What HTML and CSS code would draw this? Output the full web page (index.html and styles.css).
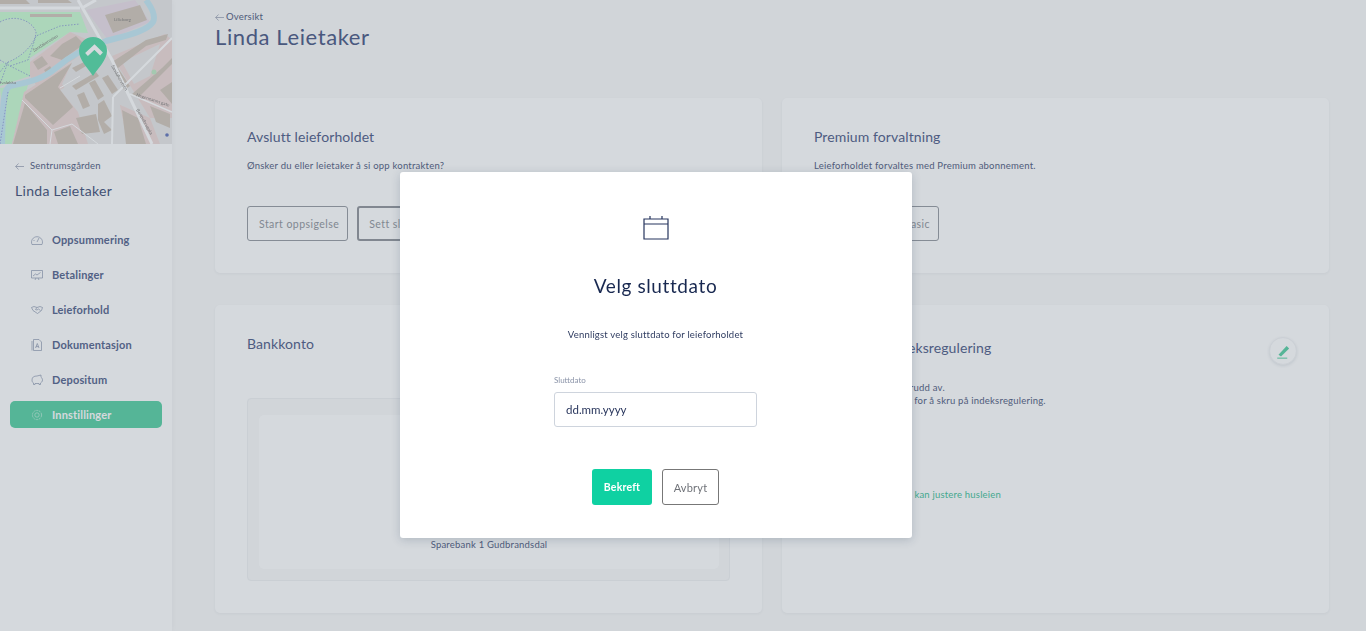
FILE: index.html
```html
<!DOCTYPE html>
<html lang="en">
<head>
    <meta charset="UTF-8">
    <meta name="viewport" content="width=device-width, initial-scale=1.0">
    <title>Linda Leietaker</title>
    <link rel="stylesheet" href="styles.css">
</head>
<body>
    <div class="layout">
        <aside class="sidebar">
            <svg class="map" viewBox="0 0 172 144" width="172" height="144">
                <rect width="172" height="144" fill="#ebeae9"/>
                <!-- parks -->
                <path d="M0 12H80L88 33L70 32L30 58L30 76L0 86Z" fill="#cdfcd5"/>
                <path d="M0 22C14 14 32 20 36 32C36 44 20 58 8 62L0 64Z" fill="#d9f6e0"/>
                <path d="M0 88L28 85L22 105L12 144H5Z" fill="#cdfcd5"/>
                <!-- pink plots -->
                <path d="M30 62L70 32L88 40L76 58L36 85L30 76Z" fill="#f0dcda"/>
                <path d="M24 92L72 62L62 84L78 108L100 144H12Z" fill="#f0dcda"/>
                <path d="M112 56L165 34L172 40V118L150 118Z" fill="#f0dcda"/>
                <path d="M86 10L135 0L150 22L108 40Z" fill="#ece0ea"/>
                <path d="M118 104L150 118L160 144H122Z" fill="#f0dcda"/>
                <!-- plain residential area -->
                <path d="M60 90L92 72L118 96L128 144H88L78 112Z" fill="#ebeae9"/>
                <path d="M122 62L160 44L150 76L134 84Z" fill="#ebeae9"/>
                <!-- buildings -->
                <g fill="#d5cabf">
                    <path d="M25 95L72 63L58 87L73 107L53 125L25 98Z"/>
                    <path d="M25 103L47 130V144H13Z"/>
                    <path d="M105 15L140 5L147 20L113 33Z"/>
                    <path d="M50 56L62 44L76 36L84 44L62 60Z"/>
                    <path d="M33 62L42 56L48 64L38 70Z"/>
                    <path d="M44 70L50 66L54 72L48 76Z"/>
                    <path d="M72 68L84 62L86 66L76 72Z"/>
                    <path d="M72 86L96 72L99 76L76 90Z"/>
                    <path d="M89 83L95 80L104 96L98 100Z"/>
                    <path d="M102 78L108 75L118 90L112 94Z"/>
                    <path d="M77 95L84 92L90 106L83 109Z"/>
                    <path d="M98 104L104 100L112 116L104 122L112 130L104 134L98 120Z"/>
                    <path d="M76 118L96 114L100 132L82 134Z"/>
                    <path d="M54 132L70 126L78 144H58Z"/>
                    <path d="M112 62L146 40L168 34L166 40L146 46L118 68L130 86L124 90Z"/>
                    <path d="M132 94L162 68L172 58V64L138 98Z"/>
                    <path d="M160 90L172 82V104Z"/>
                    <path d="M122 110L138 118L146 144H126Z"/>
                    <path d="M150 106L170 114V128L156 122Z"/>
                    <path d="M0 0H26L30 4H0Z"/>
                    <path d="M38 0H68L72 3H38Z"/>
                    <path d="M30 14H72L72 17H30Z"/>
                </g>
                <!-- river -->
                <path d="M146 0C152 8 156 16 153 22C146 32 124 36 106 41C84 48 70 56 56 68C42 80 28 82 10 86C2 90 3 110 2 144" fill="none" stroke="#c9eaf4" stroke-width="6"/>
                <!-- roads -->
                <g fill="none" stroke="#fff">
                    <path d="M0 8H80" stroke-width="3"/>
                    <path d="M78 0L112 60L152 144" stroke-width="3"/>
                    <path d="M82 8L96 0" stroke-width="3"/>
                    <path d="M113 97L172 38" stroke-width="2"/>
                    <path d="M113 97L112 144" stroke-width="2"/>
                    <path d="M60 88L80 76" stroke-width="1"/>
                    <path d="M130 94L172 112" stroke-width="1.5"/>
                    <path d="M22 100L52 130L50 144" stroke-width="1"/>
                    <path d="M52 130L72 124L98 144" stroke-width="1"/>
                </g>
                <!-- foot paths -->
                <g fill="none" stroke="#8a8ed8" stroke-width=".7" stroke-dasharray="1.5 1.5">
                    <path d="M0 22C14 14 32 20 36 32C36 44 20 58 8 62L0 72"/>
                    <path d="M0 60L10 66L28 60L36 36L60 26L80 24"/>
                    <path d="M8 62L0 84"/>
                    <path d="M8 92L0 144"/>
                    <path d="M10 66L30 76"/>
                </g>
                <circle cx="154" cy="72" r="2.5" fill="#c4ecc8"/>
                <circle cx="167" cy="135" r="1.8" fill="#6d7ec0"/>
                <text x="114" y="21" class="map-label">Lilleborg</text>
                <text x="0" y="84" class="map-label">Ivaløkka</text>
                <text x="34" y="52" class="map-label" transform="rotate(-32 34 52)">Sandakerveien</text>
                <text x="111" y="66" class="map-label" transform="rotate(60 111 66)">Sandakerveien</text>
                <text x="136" y="110" class="map-label" transform="rotate(60 136 110)">Bentsebrugata</text>
                <text x="136" y="96" class="map-label" transform="rotate(18 136 96)">Hegermanns gate</text>
                <path d="M93 76C88 68 79 60 79 51A14 14 0 0 1 107 51C107 60 98 68 93 76Z" fill="#5fdcab"/>
                <path d="M86.5 54.5L94.5 47L101.5 54" fill="none" stroke="#fff" stroke-width="4"/>
            </svg>
            <div class="side-head">
                <a class="back side-back"><svg class="arrow" viewBox="0 0 9 7" width="9" height="7"><path d="M9 3.5H.7M3.5 .5L.7 3.5L3.5 6.5"/></svg>Sentrumsgården</a>
                <h2>Linda Leietaker</h2>
            </div>
            <nav class="menu">
                <a class="menu-item">
                    <svg viewBox="0 0 12 12" width="12" height="12"><path d="M1 10.5A5.5 5.5 0 1 1 11 10.5ZM6 8L8 4M2.5 6.5H3.5"/></svg>
                    Oppsummering
                </a>
                <a class="menu-item">
                    <svg viewBox="0 0 12 12" width="12" height="12"><path d="M.5 1.5H11.5V9H.5ZM2 7L4.5 5L6 6L9.5 3.5M4 11L5 9M8 11L7 9"/></svg>
                    Betalinger
                </a>
                <a class="menu-item">
                    <svg viewBox="0 0 12 12" width="12" height="12"><path d="M.5 3.5L3 2.5L6 3.5L9 2.5L11.5 3.5L10.5 6.5L6.5 9.5L2 6.5ZM6 3.5L4.5 5.5L6 6L7.5 5L9.5 6.5"/></svg>
                    Leieforhold
                </a>
                <a class="menu-item">
                    <svg viewBox="0 0 12 12" width="12" height="12"><path d="M2.5 .5H8L10.5 3V11.5H2.5ZM1 2V11.5M4.5 9L6.3 4.5L8 9M5 7.6H7.6"/></svg>
                    Dokumentasjon
                </a>
                <a class="menu-item">
                    <svg viewBox="0 0 12 12" width="12" height="12"><path d="M1 6C1 3 3 2 6 2C7.5 2 8.5 1 10 1V3.2C11 4 11.5 5 11.5 6C11.5 8 10 8.5 9.5 9V10.5H8V9.5H4V10.5H2.5V9C1.5 8.5 1 7.5 1 6Z"/></svg>
                    Depositum
                </a>
                <a class="menu-item active">
                    <svg viewBox="0 0 12 12" width="12" height="12"><circle cx="6" cy="6" r="2.2"/><circle cx="6" cy="6" r="4.6" stroke-dasharray="2.2 .7"/></svg>
                    Innstillinger
                </a>
            </nav>
        </aside>

        <main class="main">
            <header class="page-head">
                <a class="back"><svg class="arrow" viewBox="0 0 9 7" width="9" height="7"><path d="M9 3.5H.7M3.5 .5L.7 3.5L3.5 6.5"/></svg>Oversikt</a>
                <h1>Linda Leietaker</h1>
            </header>
            <div class="cards">
                <section class="card card-top">
                    <h3>Avslutt leieforholdet</h3>
                    <p>Ønsker du eller leietaker å si opp kontrakten?</p>
                    <div class="actions">
                        <button class="outline-button">Start oppsigelse</button>
                        <button class="outline-button focused">Sett sluttdato</button>
                    </div>
                </section>
                <section class="card card-top">
                    <h3>Premium forvaltning</h3>
                    <p>Leieforholdet forvaltes med Premium abonnement.</p>
                    <div class="actions push">
                        <button class="outline-button">Bytt til Basic</button>
                    </div>
                </section>
                <section class="card card-bottom">
                    <h3>Bankkonto</h3>
                    <div class="bank-well">
                        <div class="bank-card">
                            <span>Sparebank 1 Gudbrandsdal</span>
                        </div>
                    </div>
                </section>
                <section class="card card-bottom index-card">
                    <div class="index-head">
                        <h3>Automatisk indeksregulering</h3>
                        <button class="round-button">
                            <svg viewBox="0 0 12 12" width="15" height="15"><path d="M2 8.5L8.5 1.5L10.5 3.5L4 10Z"/><path class="line" d="M1 11.3H9"/></svg>
                        </button>
                    </div>
                    <p>Indeksregulering er skrudd av.<br>Trykk på blyant-ikonet for å skru på indeksregulering.</p>
                    <a class="teal-link">Se mer om hvordan du kan justere husleien</a>
                </section>
            </div>
        </main>
    </div>

    <div class="overlay">
        <div class="modal">
            <svg class="modal-icon" viewBox="0 0 26 25" width="26" height="25">
                <path d="M1 4H25V24H1ZM1 9H25M7 1V4M19 1V4"/>
            </svg>
            <h2>Velg sluttdato</h2>
            <p>Vennligst velg sluttdato for leieforholdet</p>
            <label class="field">
                <span>Sluttdato</span>
                <input type="text" value="dd.mm.yyyy">
            </label>
            <div class="modal-actions">
                <button class="confirm-button">Bekreft</button>
                <button class="cancel-button">Avbryt</button>
            </div>
        </div>
    </div>
</body>
</html>
```

FILE: styles.css
```css
* {
    box-sizing: border-box;
}
html, body {
    height: 100%;
}
body {
    margin: 0;
    background-color: #fafafa;
    color: #4d5a80;
    font-family: "Lato", "Liberation Sans", sans-serif;
    overflow: hidden;
}
h1, h2, h3, p {
    margin: 0;
    font-weight: 400;
}
.layout {
    display: flex;
    height: 100%;
}

/* Sidebar */
.sidebar {
    width: 172px;
    flex-shrink: 0;
    background-color: #fff;
    box-shadow: 0 0 6px rgba(30, 50, 80, 0.04);
}
.map {
    display: block;
    filter: blur(0.5px);
}
.map-label {
    font-size: 4.5px;
    fill: #8b8886;
}
.side-head {
    padding: 16px 15px 0;
}
.back {
    display: flex;
    align-items: center;
    gap: 2px;
    font-size: 9.5px;
    line-height: 12px;
    letter-spacing: 0.2px;
    color: #5c6788;
}
.side-back {
    gap: 6px;
}
.arrow {
    fill: none;
    stroke: #959cb0;
    stroke-width: 0.7;
}
.side-head h2 {
    margin-top: 10px;
    font-size: 14px;
    line-height: 18px;
    letter-spacing: 0.3px;
}
.menu {
    margin-top: 26px;
    padding: 0 10px;
}
.menu-item {
    display: flex;
    align-items: center;
    gap: 9px;
    height: 27px;
    margin-bottom: 8px;
    padding-left: 21px;
    border-radius: 5px;
    font-size: 11px;
    font-weight: 700;
    letter-spacing: 0.16px;
    color: #5f6d94;
}
.menu-item svg {
    fill: none;
    stroke: #949db5;
    stroke-width: 0.7;
}
.menu-item.active {
    margin-top: 1px;
    background-color: #63d3aa;
    color: #fff;
}
.menu-item.active svg {
    stroke: #c8f2e0;
}

/* Main column */
.main {
    flex: 1;
    padding: 11px 37px 0 43px;
}
.page-head h1 {
    font-size: 22px;
    line-height: 28px;
    letter-spacing: 0.6px;
    color: #55628c;
}
.cards {
    display: grid;
    grid-template-columns: 1fr 1fr;
    grid-template-rows: 175px 308px;
    column-gap: 20px;
    row-gap: 32px;
    margin-top: 47px;
}
.card {
    background-color: #fff;
    border-radius: 5px;
    box-shadow: 0 1px 3px rgba(30, 50, 80, 0.05);
    padding: 30px 32px;
}
.card h3 {
    font-size: 14px;
    line-height: 18px;
    letter-spacing: 0.1px;
    color: #5a678f;
}
.card p {
    font-size: 9.5px;
    line-height: 13px;
    letter-spacing: 0.22px;
    color: #5c6788;
}
.card-top p {
    margin-top: 13px;
}
.actions {
    display: flex;
    gap: 9px;
    margin-top: 34px;
}
.outline-button {
    height: 35px;
    padding: 0 8px 0 11px;
    background: transparent;
    border: 1px solid #9ea1a8;
    border-radius: 3px;
    font-family: inherit;
    font-size: 10.5px;
    letter-spacing: 0.45px;
    color: #999ca3;
}
.outline-button.focused {
    padding-left: 10px;
    border: 2px solid #999ca2;
}
.push .outline-button {
    width: 125px;
    text-align: right;
}

/* Bank card */
.bank-well {
    height: 183px;
    margin-top: 45px;
    padding: 16px 10px 11px 11px;
    background-color: #fafafa;
    border: 1px solid #f2f3f5;
    border-radius: 4px;
}
.bank-card {
    display: flex;
    align-items: flex-end;
    justify-content: center;
    height: 100%;
    padding-bottom: 18px;
    background-color: #fff;
    border-radius: 5px;
    font-size: 9.5px;
    line-height: 13px;
    letter-spacing: 0.2px;
    color: #5c6788;
}

/* Index regulation card */
.index-head {
    display: flex;
    justify-content: space-between;
    align-items: flex-start;
    padding-top: 2px;
}
.index-head h3 {
    margin-top: 2px;
}
.round-button {
    display: flex;
    align-items: center;
    justify-content: center;
    width: 28px;
    height: 28px;
    padding: 0;
    background-color: #fff;
    border: 1px solid #f3f4f6;
    border-radius: 50%;
    box-shadow: 0 1px 3px rgba(30, 50, 80, 0.1);
}
.round-button path {
    fill: #63d3aa;
}
.round-button .line {
    fill: none;
    stroke: #63d3aa;
    stroke-width: 0.8;
}
.index-card p {
    margin-top: 16px;
}
.teal-link {
    display: block;
    margin-top: 81px;
    font-size: 9.5px;
    line-height: 13px;
    letter-spacing: 0.2px;
    color: #4ec5a0;
}

/* Dialog */
.overlay {
    position: fixed;
    inset: 0;
    padding: 172px 0 0 400px;
    background-color: rgba(22, 44, 66, 0.18);
}
.modal {
    display: flex;
    flex-direction: column;
    align-items: center;
    width: 512px;
    height: 366px;
    padding: 43px 1px 0 0;
    background-color: #fff;
    border-radius: 3px;
    box-shadow: 0 2px 10px rgba(30, 50, 80, 0.2);
    color: #182850;
}
.modal-icon {
    fill: none;
    stroke: #26355e;
    stroke-width: 1.2;
}
.modal h2 {
    margin-top: 33px;
    font-size: 19px;
    line-height: 26px;
    letter-spacing: 0.6px;
}
.modal p {
    margin-top: 29px;
    font-size: 9.5px;
    line-height: 13px;
    letter-spacing: 0.2px;
    color: #2e3b60;
}
.field {
    display: flex;
    flex-direction: column;
    gap: 7px;
    width: 203px;
    margin-top: 35px;
}
.field span {
    font-size: 8px;
    line-height: 9px;
    color: #8a93a8;
}
.field input {
    height: 35px;
    padding: 0 11px;
    border: 1px solid #ced4dd;
    border-radius: 3px;
    font-family: inherit;
    font-size: 11.5px;
    color: #28355c;
}
.modal-actions {
    display: flex;
    gap: 10px;
    margin-top: 42px;
}
.confirm-button {
    width: 60px;
    height: 36px;
    background-color: #0fd1a2;
    border: none;
    border-radius: 3px;
    font-family: inherit;
    font-size: 10.5px;
    font-weight: 700;
    letter-spacing: 0.2px;
    color: #fff;
}
.cancel-button {
    width: 57px;
    height: 36px;
    background-color: #fff;
    border: 1px solid #777;
    border-radius: 3px;
    font-family: inherit;
    font-size: 11px;
    letter-spacing: 0.2px;
    color: #6f7278;
}
```
